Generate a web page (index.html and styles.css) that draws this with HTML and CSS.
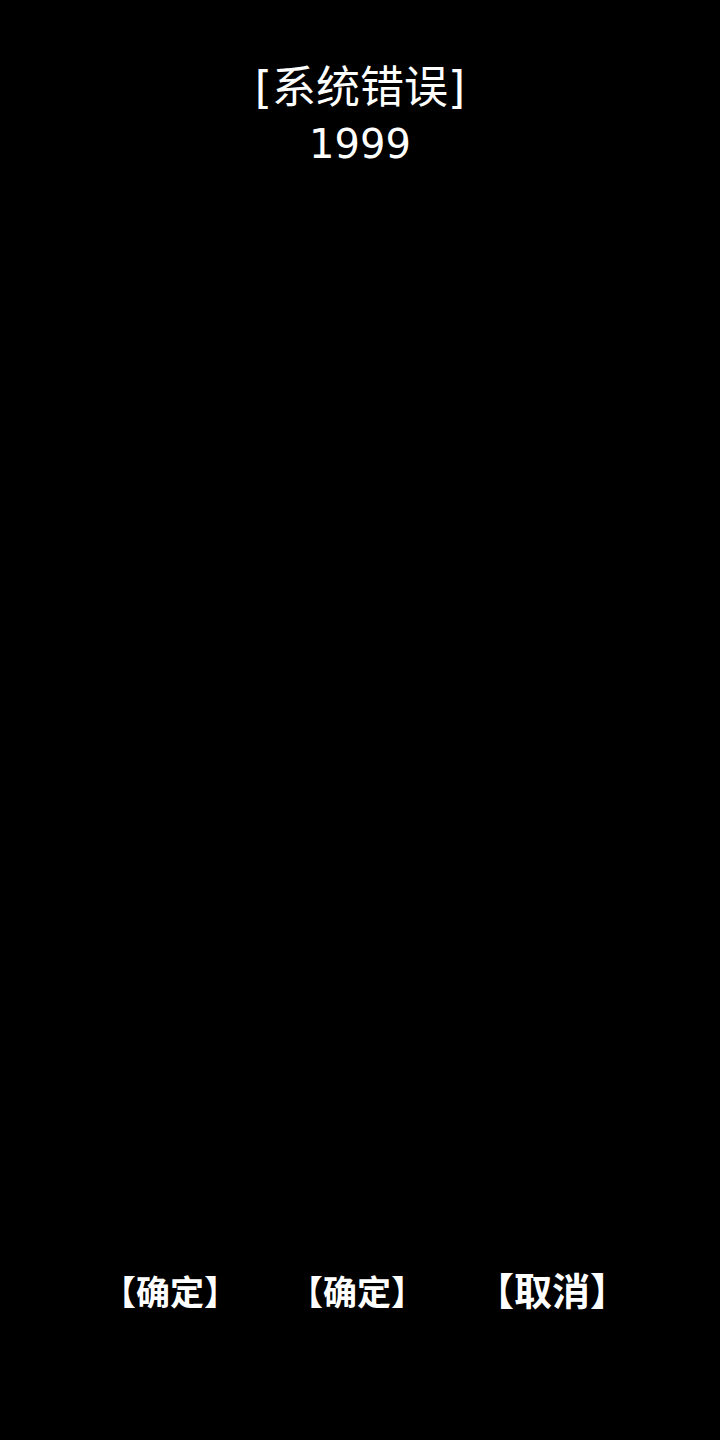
FILE: index.html
```html
<!DOCTYPE html>
<html lang="zh">
<head>
<meta charset="utf-8">
<link rel="stylesheet" href="styles.css">
</head>
<body>
<div class="screen">
  <div class="title">
    <div class="line">[系统错误]</div>
    <div class="line num">1999</div>
  </div>
  <div class="spacer"></div>
  <div class="actions">
    <span class="btn">【确定】</span>
    <span class="btn">【确定】</span>
    <span class="btn btn-big">【取消】</span>
  </div>
</div>
</body>
</html>
```
FILE: styles.css
```css
html, body {
  margin: 0;
  padding: 0;
  background: #000;
}
.screen {
  width: 720px;
  height: 1440px;
  display: flex;
  flex-direction: column;
  color: #fff;
  font-family: "Noto Sans CJK SC", "Noto Sans", sans-serif;
}
.title {
  padding-top: 61px;
  text-align: center;
  font-family: "DejaVu Sans", "Noto Sans CJK SC", sans-serif;
  font-size: 44px;
  font-weight: 400;
}
.line {
  line-height: 54px;
}
.num {
  font-size: 40px;
  line-height: 58px;
}
.spacer {
  flex: 1;
}
.actions {
  display: flex;
  justify-content: center;
  align-items: baseline;
  gap: 51px;
  padding-left: 10px;
  padding-bottom: 129px;
  font-size: 34px;
  line-height: 40px;
  font-weight: 700;
}
.btn-big {
  font-size: 38px;
}
```
